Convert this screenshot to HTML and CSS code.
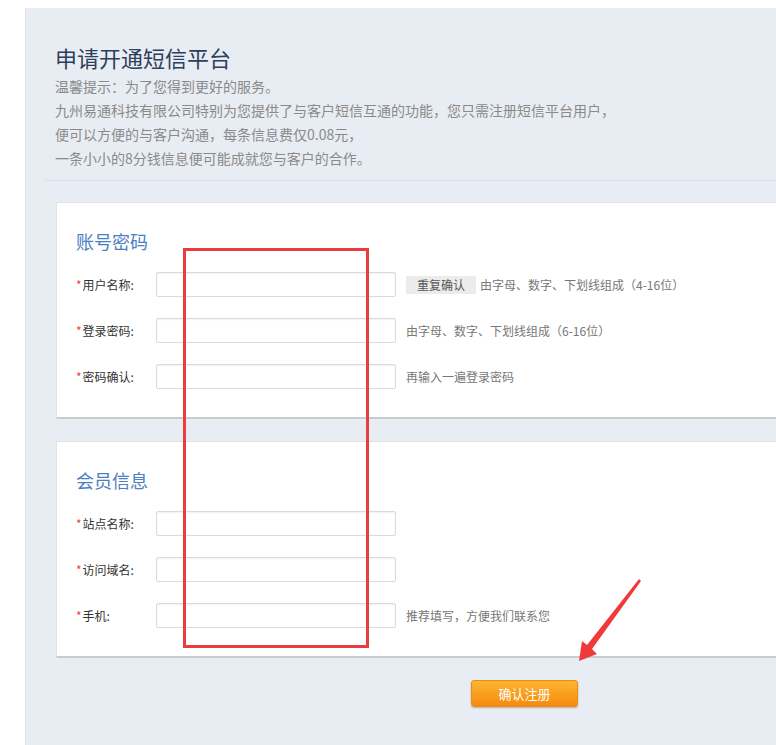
FILE: index.html
```html
<!DOCTYPE html>
<html lang="zh-CN">
<head>
    <meta charset="UTF-8">
    <meta name="viewport" content="width=device-width, initial-scale=1.0">
    <title>申请开通短信平台</title>
    <link rel="stylesheet" href="styles.css">
</head>
<body>
    <div class="panel">
        <!-- Intro -->
        <div class="intro">
            <h1>申请开通短信平台</h1>
            <p>温馨提示：为了您得到更好的服务。</p>
            <p>九州易通科技有限公司特别为您提供了与客户短信互通的功能，您只需注册短信平台用户，</p>
            <p>便可以方便的与客户沟通，每条信息费仅0.08元，</p>
            <p>一条小小的8分钱信息便可能成就您与客户的合作。</p>
        </div>

        <!-- Account -->
        <div class="card">
            <h2>账号密码</h2>
            <div class="row">
                <label class="label"><span class="req">*</span>用户名称:</label>
                <input type="text" class="field">
                <button type="button" class="recheck">重复确认</button>
                <span class="hint hint-tight">由字母、数字、下划线组成（4-16位）</span>
            </div>
            <div class="row">
                <label class="label"><span class="req">*</span>登录密码:</label>
                <input type="password" class="field">
                <span class="hint">由字母、数字、下划线组成（6-16位）</span>
            </div>
            <div class="row">
                <label class="label"><span class="req">*</span>密码确认:</label>
                <input type="password" class="field">
                <span class="hint">再输入一遍登录密码</span>
            </div>
        </div>

        <!-- Member info -->
        <div class="card">
            <h2>会员信息</h2>
            <div class="row">
                <label class="label"><span class="req">*</span>站点名称:</label>
                <input type="text" class="field">
            </div>
            <div class="row">
                <label class="label"><span class="req">*</span>访问域名:</label>
                <input type="text" class="field">
            </div>
            <div class="row">
                <label class="label"><span class="req">*</span>手机:</label>
                <input type="text" class="field">
                <span class="hint">推荐填写，方便我们联系您</span>
            </div>
        </div>

        <div class="actions">
            <button type="button" class="submit">确认注册</button>
        </div>
    </div>

    <!-- Annotation marks -->
    <div class="mark-box"></div>
    <svg class="mark-arrow" width="80" height="95" viewBox="0 0 80 95">
        <polygon points="9,86 12,66 17,70 69,4 71,6 22,74 27,79" fill="#f03a3a"/>
    </svg>
</body>
</html>
```

FILE: styles.css
```css
* {
    margin: 0;
    padding: 0;
    box-sizing: border-box;
    font-family: "Noto Sans CJK SC", "Liberation Sans", sans-serif;
}

body {
    background-color: #fff;
    overflow: hidden;
    height: 745px;
    position: relative;
}

/* Main panel */
.panel {
    margin: 8px 0 0 25px;
    width: 800px;
    min-height: 737px;
    background-color: #e8edf3;
    border-left: 1px solid #dbe2ea;
}

.intro {
    margin-left: 19px;
    padding: 34px 0 10px 10px;
    border-bottom: 1px solid #d6dee8;
}

.intro h1 {
    font-size: 22px;
    font-weight: normal;
    line-height: 30px;
    color: #2d3f5d;
    margin-bottom: 2px;
}

.intro p {
    font-size: 14px;
    line-height: 24px;
    color: #8a8a8a;
}

/* Cards */
.card {
    margin: 21px 0 0 30px;
    padding: 26px 0 28px 19px;
    background: #fff;
    border: 1px solid #e2e2e2;
    border-bottom: 2px solid #c9cbcd;
}

.card + .card {
    margin-top: 22px;
}

.card h2 {
    font-size: 18px;
    font-weight: normal;
    line-height: 24px;
    color: #4d7ebf;
    margin-bottom: 19px;
}

.row {
    display: flex;
    align-items: center;
    height: 25px;
}

.row + .row {
    margin-top: 21px;
}

.label {
    width: 80px;
    font-size: 12px;
    color: #333;
}

.req {
    color: #e44;
    margin-right: 1px;
}

.field {
    width: 240px;
    height: 25px;
    border: 1px solid #dadada;
    border-radius: 2px;
    box-shadow: inset 0 1px 2px rgba(0, 0, 0, 0.06);
    outline: none;
}

.recheck {
    margin-left: 10px;
    width: 70px;
    height: 18px;
    border: none;
    background-color: #ececec;
    font-size: 12px;
    color: #555;
}

.hint {
    margin-left: 10px;
    font-size: 12px;
    color: #777;
}

.hint-tight {
    margin-left: 4px;
}

/* Submit */
.actions {
    padding: 22px 0 0 445px;
}

.submit {
    width: 107px;
    height: 27px;
    border: 1px solid #ec8c12;
    border-radius: 3px;
    background: linear-gradient(#fdb533, #f58a0d);
    box-shadow: 0 1px 2px rgba(0, 0, 0, 0.25);
    color: #fff;
    font-size: 13px;
    cursor: pointer;
}

/* Annotation marks over the form */
.mark-box {
    position: absolute;
    left: 183px;
    top: 248px;
    width: 186px;
    height: 400px;
    border: 3px solid #e83e3e;
}

.mark-arrow {
    position: absolute;
    left: 570px;
    top: 575px;
}
```
